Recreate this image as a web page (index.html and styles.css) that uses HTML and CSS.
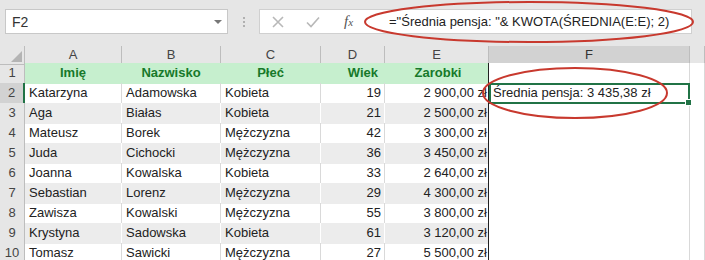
FILE: index.html
```html
<!DOCTYPE html>
<html lang="pl">
<head>
    <meta charset="UTF-8">
    <title>Średnia pensja</title>
    <link rel="stylesheet" href="styles.css">
</head>
<body>
    <div class="sheet">
        <div class="toolbar">
            <div class="name-box">
                <span>F2</span>
                <span class="caret"></span>
            </div>
            <div class="grip"><i></i><i></i><i></i></div>
            <div class="formula-box">
                <svg class="tool" width="16" height="16" viewBox="0 0 16 16">
                    <path d="M3 3 L13 13 M13 3 L3 13" stroke="#b8b8b8" stroke-width="1.6" fill="none"/>
                </svg>
                <svg class="tool" width="16" height="16" viewBox="0 0 16 16">
                    <path d="M2 8.5 L6 12.5 L14 3.5" stroke="#b8b8b8" stroke-width="1.6" fill="none"/>
                </svg>
                <span class="fx">f<small>x</small></span>
                <span class="formula">="Średnia pensja: "&amp; KWOTA(ŚREDNIA(E:E); 2)</span>
            </div>
        </div>

        <div class="grid">
            <div class="row head">
                <div class="corner"></div>
                <div class="col">A</div>
                <div class="col">B</div>
                <div class="col">C</div>
                <div class="col">D</div>
                <div class="col">E</div>
                <div class="col active">F</div>
                <div class="col"></div>
            </div>
            <div class="row title">
                <div class="num">1</div>
                <div class="c">Imię</div>
                <div class="c">Nazwisko</div>
                <div class="c">Płeć</div>
                <div class="c r">Wiek</div>
                <div class="c last">Zarobki</div>
                <div class="c out"></div>
                <div class="c out"></div>
            </div>
            <div class="row">
                <div class="num active">2</div>
                <div class="c">Katarzyna</div>
                <div class="c">Adamowska</div>
                <div class="c">Kobieta</div>
                <div class="c r">19</div>
                <div class="c r last">2 900,00 zł</div>
                <div class="c out selected">Średnia pensja: 3 435,38 zł<span class="handle"></span></div>
                <div class="c out"></div>
            </div>
            <div class="row band">
                <div class="num">3</div>
                <div class="c">Aga</div>
                <div class="c">Białas</div>
                <div class="c">Kobieta</div>
                <div class="c r">21</div>
                <div class="c r last">2 500,00 zł</div>
                <div class="c out"></div>
                <div class="c out"></div>
            </div>
            <div class="row">
                <div class="num">4</div>
                <div class="c">Mateusz</div>
                <div class="c">Borek</div>
                <div class="c">Mężczyzna</div>
                <div class="c r">42</div>
                <div class="c r last">3 300,00 zł</div>
                <div class="c out"></div>
                <div class="c out"></div>
            </div>
            <div class="row band">
                <div class="num">5</div>
                <div class="c">Juda</div>
                <div class="c">Cichocki</div>
                <div class="c">Mężczyzna</div>
                <div class="c r">36</div>
                <div class="c r last">3 450,00 zł</div>
                <div class="c out"></div>
                <div class="c out"></div>
            </div>
            <div class="row">
                <div class="num">6</div>
                <div class="c">Joanna</div>
                <div class="c">Kowalska</div>
                <div class="c">Kobieta</div>
                <div class="c r">33</div>
                <div class="c r last">2 640,00 zł</div>
                <div class="c out"></div>
                <div class="c out"></div>
            </div>
            <div class="row band">
                <div class="num">7</div>
                <div class="c">Sebastian</div>
                <div class="c">Lorenz</div>
                <div class="c">Mężczyzna</div>
                <div class="c r">29</div>
                <div class="c r last">4 300,00 zł</div>
                <div class="c out"></div>
                <div class="c out"></div>
            </div>
            <div class="row">
                <div class="num">8</div>
                <div class="c">Zawisza</div>
                <div class="c">Kowalski</div>
                <div class="c">Mężczyzna</div>
                <div class="c r">55</div>
                <div class="c r last">3 800,00 zł</div>
                <div class="c out"></div>
                <div class="c out"></div>
            </div>
            <div class="row band">
                <div class="num">9</div>
                <div class="c">Krystyna</div>
                <div class="c">Sadowska</div>
                <div class="c">Kobieta</div>
                <div class="c r">61</div>
                <div class="c r last">3 120,00 zł</div>
                <div class="c out"></div>
                <div class="c out"></div>
            </div>
            <div class="row">
                <div class="num">10</div>
                <div class="c">Tomasz</div>
                <div class="c">Sawicki</div>
                <div class="c">Mężczyzna</div>
                <div class="c r">27</div>
                <div class="c r last">5 500,00 zł</div>
                <div class="c out"></div>
                <div class="c out"></div>
            </div>
        </div>

        <!-- red hand-drawn marks -->
        <svg class="marks" width="705" height="260" viewBox="0 0 705 260">
            <ellipse cx="529" cy="22" rx="164" ry="20" fill="none" stroke="#c8392e" stroke-width="2"/>
            <ellipse cx="575" cy="93" rx="92" ry="25" fill="none" stroke="#c8392e" stroke-width="2"/>
        </svg>
    </div>
</body>
</html>
```

FILE: styles.css
```css
body {
    margin: 0;
    font-family: "Liberation Sans", Arial, sans-serif;
    color: #222;
}
.sheet {
    position: relative;
    width: 705px;
    height: 260px;
    overflow: hidden;
    background: #fff;
}
.toolbar {
    height: 46px;
    background: #e6e6e6;
    display: flex;
    align-items: flex-start;
    padding: 9px 0 0 5px;
    box-sizing: border-box;
}
.name-box {
    width: 223px;
    height: 25px;
    box-sizing: border-box;
    background: #fff;
    border: 1px solid #c8c8c8;
    display: flex;
    align-items: center;
    justify-content: space-between;
    padding: 0 5px 0 6px;
    font-size: 14px;
    color: #333;
}
.caret {
    width: 0;
    height: 0;
    border-left: 4px solid transparent;
    border-right: 4px solid transparent;
    border-top: 4px solid #777;
}
.grip {
    width: 31px;
    height: 25px;
    display: flex;
    flex-direction: column;
    align-items: center;
    justify-content: center;
    gap: 2px;
}
.grip i {
    width: 2px;
    height: 2px;
    background: #b0b0b0;
}
.formula-box {
    width: 433px;
    height: 25px;
    box-sizing: border-box;
    background: #fff;
    border: 1px solid #d0d0d0;
    display: flex;
    align-items: center;
    padding-left: 10px;
}
.tool {
    margin-right: 19px;
}
.fx {
    font-family: "Liberation Serif", serif;
    font-style: italic;
    font-size: 15px;
    color: #555;
    margin-left: 4px;
    width: 45px;
}
.fx small {
    font-size: 11px;
}
.formula {
    font-size: 13px;
    color: #222;
    white-space: nowrap;
}
.row {
    display: grid;
    grid-template-columns: 25px 97px 99px 100px 64px 104px 201px 1fr;
    height: 20px;
    font-size: 13px;
    line-height: 20px;
}
.row.head {
    height: 17px;
    line-height: 17px;
    background: #e6e6e6;
}
.corner {
    position: relative;
    border-right: 1px solid #bdbdbd;
    border-bottom: 1px solid #bdbdbd;
}
.corner::after {
    content: "";
    position: absolute;
    right: 2px;
    bottom: 2px;
    width: 0;
    height: 0;
    border-left: 11px solid transparent;
    border-bottom: 11px solid #b4b4b4;
}
.col {
    text-align: center;
    color: #444;
    border-right: 1px solid #bdbdbd;
    border-bottom: 1px solid #bdbdbd;
}
.col.active {
    background: #d2d2d2;
    border-bottom: 2px solid #217346;
    color: #333;
}
.num {
    background: #e6e6e6;
    color: #444;
    text-align: center;
    border-right: 1px solid #bdbdbd;
    border-bottom: 1px solid #cfcfcf;
}
.num.active {
    background: #d2d2d2;
    border-right: 2px solid #217346;
}
.c {
    padding: 0 4px;
    white-space: nowrap;
    overflow: visible;
    border-right: 1px solid #d9d9d9;
    border-bottom: 1px solid #e2e2e2;
}
.c.r {
    text-align: right;
    padding-right: 3px;
}
.c.last {
    border-right: 1px solid #222;
    padding-right: 1px;
}
.title .c {
    background: #c6efce;
    color: #17792a;
    font-weight: bold;
    text-align: center;
    border-right-color: #c6efce;
    border-bottom-color: #c6efce;
}
.title .c.r {
    text-align: right;
    padding-right: 6px;
}
.title .c.last {
    border-right-color: #222;
}
.band .c {
    background: #ececec;
    border-right-color: #fff;
    border-bottom-color: #ececec;
}
.band .c.last {
    border-right-color: #222;
}
.row .c.out {
    background: #fff;
    border-right: 1px solid #d9d9d9;
    border-bottom: 1px solid #d9d9d9;
}
.row .c.selected {
    position: relative;
    border: 2px solid #217346;
    line-height: 16px;
    padding-left: 2px;
}
.handle {
    position: absolute;
    right: -4px;
    bottom: -4px;
    width: 5px;
    height: 5px;
    background: #217346;
    border: 1px solid #fff;
}
.marks {
    position: absolute;
    left: 0;
    top: 0;
    pointer-events: none;
}
```
